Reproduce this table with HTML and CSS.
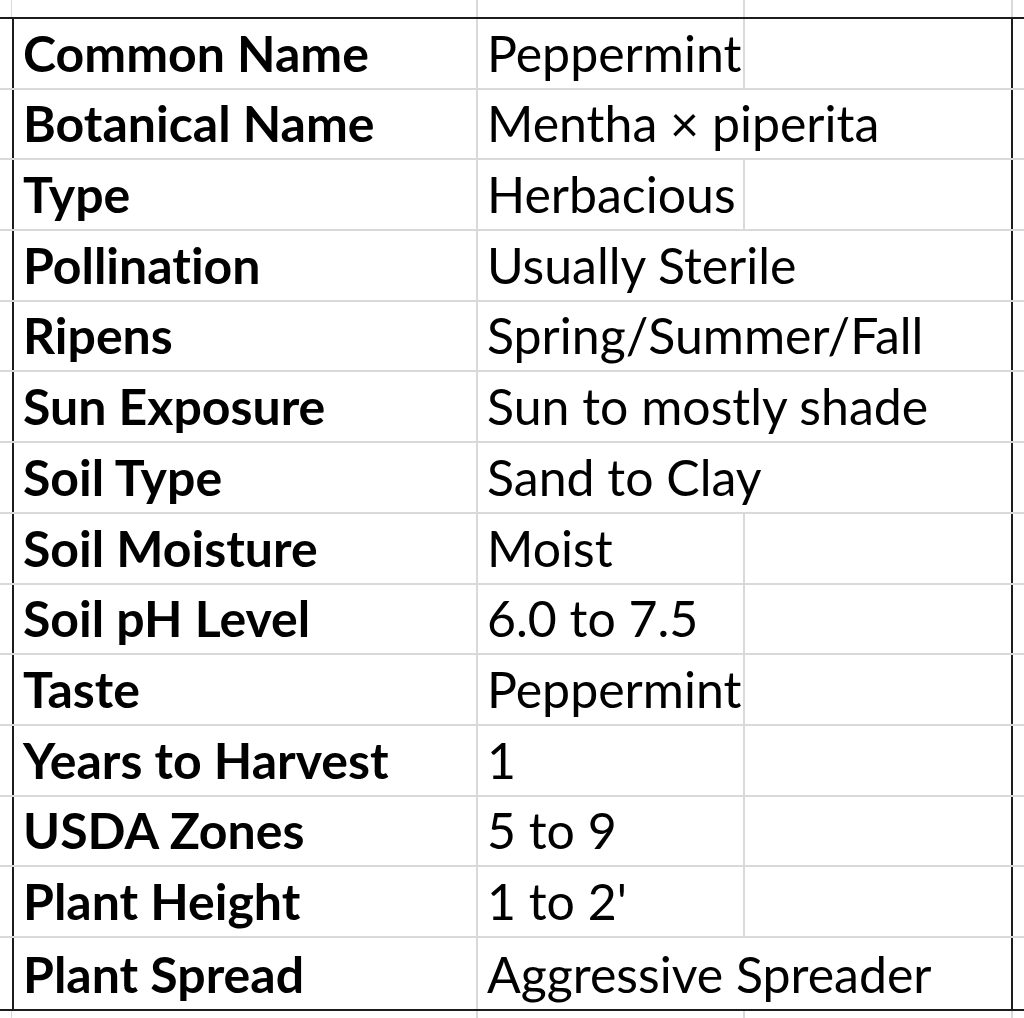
FILE: index.html
```html
<!DOCTYPE html>
<html lang="en">
<head>
<meta charset="utf-8">
<title>Peppermint</title>
<link rel="stylesheet" href="styles.css">
</head>
<body>
<div class="sheet">
  <div class="edge edge-top">
    <div class="ec"></div><div class="ec"></div><div class="ec"></div><div class="ec"></div><div class="ec last"></div>
  </div>
  <div class="table">
    <div class="row"><div class="gut"></div><div class="label">Common Name</div><div class="value split">Peppermint</div><div class="rest"></div></div>
    <div class="row"><div class="gut"></div><div class="label">Botanical Name</div><div class="value">Mentha × piperita</div><div class="rest"></div></div>
    <div class="row"><div class="gut"></div><div class="label">Type</div><div class="value split">Herbacious</div><div class="rest"></div></div>
    <div class="row"><div class="gut"></div><div class="label">Pollination</div><div class="value">Usually Sterile</div><div class="rest"></div></div>
    <div class="row"><div class="gut"></div><div class="label">Ripens</div><div class="value">Spring/Summer/Fall</div><div class="rest"></div></div>
    <div class="row"><div class="gut"></div><div class="label">Sun Exposure</div><div class="value">Sun to mostly shade</div><div class="rest"></div></div>
    <div class="row"><div class="gut"></div><div class="label">Soil Type</div><div class="value">Sand to Clay</div><div class="rest"></div></div>
    <div class="row"><div class="gut"></div><div class="label">Soil Moisture</div><div class="value split">Moist</div><div class="rest"></div></div>
    <div class="row"><div class="gut"></div><div class="label">Soil pH Level</div><div class="value split">6.0 to 7.5</div><div class="rest"></div></div>
    <div class="row"><div class="gut"></div><div class="label">Taste</div><div class="value split">Peppermint</div><div class="rest"></div></div>
    <div class="row"><div class="gut"></div><div class="label">Years to Harvest</div><div class="value split">1</div><div class="rest"></div></div>
    <div class="row"><div class="gut"></div><div class="label">USDA Zones</div><div class="value split">5 to 9</div><div class="rest"></div></div>
    <div class="row"><div class="gut"></div><div class="label">Plant Height</div><div class="value split">1 to 2'</div><div class="rest"></div></div>
    <div class="row last"><div class="gut"></div><div class="label">Plant Spread</div><div class="value">Aggressive Spreader</div><div class="rest"></div></div>
  </div>
  <div class="edge edge-bottom">
    <div class="ec"></div><div class="ec"></div><div class="ec"></div><div class="ec"></div><div class="ec last"></div>
  </div>
</div>
</body>
</html>
```

FILE: styles.css
```css
html, body {
  margin: 0;
  padding: 0;
  background: #ffffff;
}

body {
  font-family: "Lato", "Liberation Sans", sans-serif;
  color: #000000;
  width: 1024px;
  height: 1018px;
  overflow: hidden;
  font-variant-ligatures: none;
}

.sheet {
  display: flex;
  flex-direction: column;
}

.edge {
  display: grid;
  grid-template-columns: 12px 466px 267px 268px 11px;
}

.edge-top {
  height: 17px;
}

.edge-bottom {
  height: 10px;
}

.ec {
  border-right: 2px solid #d9d9d9;
}

.ec:first-child {
  border-right-width: 1px;
}

.ec.last {
  border-right: none;
}

.table {
  border-top: 2px solid #1c1c1c;
  border-bottom: 2px solid #1c1c1c;
}

.row {
  display: grid;
  grid-template-columns: 12px 466px 535px 11px;
  height: 70.7px;
  box-sizing: border-box;
  border-bottom: 2px solid #d9d9d9;
}

.row.last {
  border-bottom: none;
}

.label,
.value {
  display: flex;
  align-items: flex-end;
  padding-left: 9px;
  padding-bottom: 10px;
  font-size: 50px;
  line-height: 1;
  white-space: nowrap;
  overflow: visible;
}

.label {
  border-left: 2px solid #1c1c1c;
  font-weight: 700;
  border-right: 2px solid #d9d9d9;
}

.value {
  position: relative;
  font-weight: 400;
  border-right: 2px solid #1c1c1c;
}

.value.split::after {
  content: "";
  position: absolute;
  top: 0;
  bottom: 0;
  left: 265px;
  width: 2px;
  background: #d9d9d9;
}
```
